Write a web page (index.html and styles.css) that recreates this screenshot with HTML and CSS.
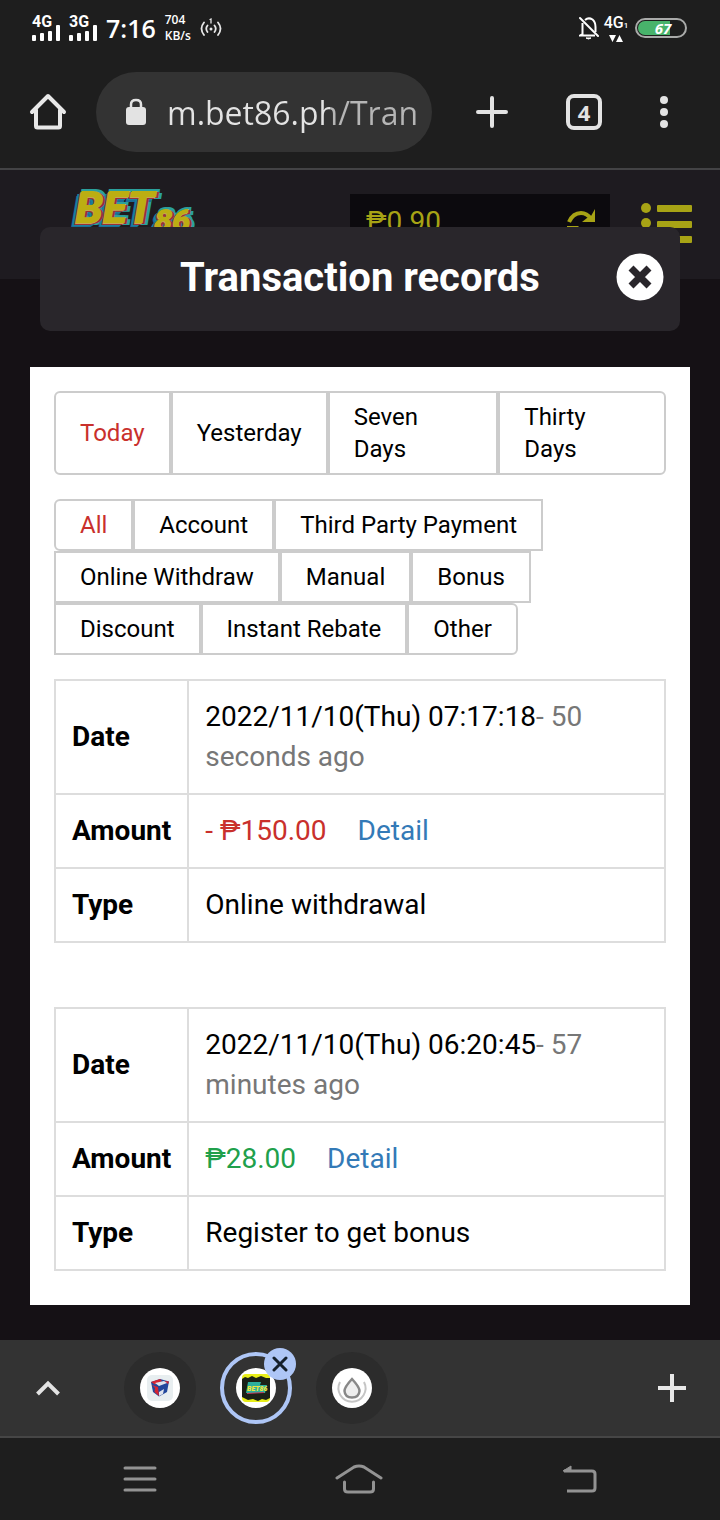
FILE: index.html
```html
<!DOCTYPE html>
<html lang="en">
<head>
<meta charset="utf-8">
<meta name="viewport" content="width=device-width, initial-scale=1">
<title>Transaction records</title>
<link rel="stylesheet" href="styles.css">
</head>
<body>
<div class="status">
  <div class="status-group">
    <div class="signal"><span class="signal-name">4G</span>
      <svg width="28" height="16" viewBox="0 0 28 16" fill="#fff"><rect y="10" width="4" height="6" rx="1"/><rect x="8" y="8" width="4" height="8" rx="1"/><rect x="16" y="6" width="4" height="10" rx="1"/><rect x="24" width="4" height="16" rx="1"/></svg></div>
    <div class="signal"><span class="signal-name">3G</span>
      <svg width="28" height="16" viewBox="0 0 28 16" fill="#fff"><rect y="10" width="4" height="6" rx="1"/><rect x="8" y="8" width="4" height="8" rx="1"/><rect x="16" y="6" width="4" height="10" rx="1"/><rect x="24" width="4" height="16" rx="1"/></svg></div>
    <span class="clock">7:16</span>
    <span class="speed">704<br>KB/s</span>
    <svg class="hotspot" width="22" height="22" viewBox="0 0 22 22" fill="none" stroke="#e8e8e8" stroke-width="1.8" stroke-linecap="round"><path d="M4 5.500Q-1 11.500 4 18M7.500 8.500Q5 11.500 7.500 15M18 5.500Q23 11.500 18 18M14.500 8.500Q17 11.500 14.500 15"/><path d="M10 2.500L11 2V6" stroke-width="1.300"/><circle cx="11" cy="12" r="1.500" fill="#e8e8e8" stroke="none"/></svg>
  </div>
  <div class="status-group status-right">
    <svg width="20" height="24" viewBox="0 0 20 24" fill="none" stroke="#fff" stroke-width="2"><path d="M6 4Q9.500 1 13.500 3.500Q16.500 6 16.500 11V16M3.500 7V18L1 19.500H16"/><path d="M1 2L19 20" stroke-linecap="round"/><path d="M7 22Q9.500 24 12 22Z" fill="#fff" stroke-width="1"/></svg>
    <div class="data"><span class="data-name">4G<small>1</small></span>
      <svg width="14" height="7" viewBox="0 0 14 7" fill="#fff"><path d="M0 0H7L3.500 7ZM7 7H14L10.500 0Z"/></svg></div>
    <div class="battery"><span class="battery-fill"></span><span class="battery-text">67</span></div>
  </div>
</div>
<header class="toolbar">
  <button class="tool tool-home" aria-label="Home"><svg width="40" height="40" viewBox="0 0 40 40" fill="none" stroke="#e8e8e8" stroke-width="4" stroke-linejoin="round" stroke-linecap="round"><path d="M4 20L20 4L36 20"/><path d="M8 18V34Q8 35.500 9.500 35.500H30.500Q32 35.500 32 34V18"/></svg></button>
  <label class="omnibox"><svg width="20" height="28" viewBox="0 0 20 28"><path d="M5 10V6.500Q5 2 10 2Q15 2 15 6.500V10" fill="none" stroke="#e3e3e3" stroke-width="2.500"/><rect y="9" width="20" height="18" rx="3" fill="#e3e3e3"/></svg>
    <input class="url" type="text" value="m.bet86.ph/Tran" aria-label="Address"></label>
  <button class="tool tool-new" aria-label="New tab"><svg width="32" height="32" viewBox="0 0 32 32" stroke="#e3e3e3" stroke-width="4" stroke-linecap="round"><path d="M16 2V30M2 16H30"/></svg></button>
  <button class="tool tool-tabs" aria-label="Tabs"><span class="tab-count">4</span></button>
  <button class="tool tool-more" aria-label="More"><svg width="8" height="32" viewBox="0 0 8 32" fill="#e3e3e3"><circle cx="4" cy="4" r="4"/><circle cx="4" cy="16" r="4"/><circle cx="4" cy="28" r="4"/></svg></button>
</header>
<main class="page">
  <div class="site-header">
    <div class="logo"><span class="logo-big">BET</span><span class="logo-small">86</span></div>
    <div class="balance"><span>₱0.90</span>
      <button class="refresh" aria-label="Refresh balance"><svg width="32" height="36" viewBox="0 0 32 36" fill="none" stroke="#a7a315" stroke-width="4"><path d="M4 13Q8 4 16 4Q22 4 26 10"/><path d="M30 0V13H17L22 9L26 7Z" fill="#a7a315" stroke="none"/><path d="M28 23Q24 32 16 32Q10 32 6 26"/><path d="M2 36V17H14L9 22Z" fill="#a7a315" stroke="none"/></svg></button></div>
    <button class="menu" aria-label="Menu"><svg width="52" height="42" viewBox="0 0 52 42" fill="#a7a315"><circle cx="5" cy="6" r="5"/><circle cx="5" cy="21" r="5"/><circle cx="5" cy="37" r="5"/><rect x="16" y="3" width="35" height="7" rx="1"/><rect x="16" y="19" width="35" height="7" rx="1"/><rect x="16" y="34" width="35" height="7" rx="1"/></svg></button>
  </div>
  <section class="dialog">
    <div class="dialog-head">
      <h1 class="dialog-title">Transaction records</h1>
      <button class="close" aria-label="Close"><svg width="48" height="48" viewBox="0 0 48 48"><circle cx="24" cy="24" r="23.500" fill="#fff"/><path d="M15 15L33 33M33 15L15 33" stroke="#29262b" stroke-width="7"/></svg></button>
    </div>
    <div class="card">
      <div class="filters">
        <button class="filter active">Today</button><button class="filter">Yesterday</button><button class="filter wide">Seven<br>Days</button><button class="filter wide">Thirty<br>Days</button>
      </div>
      <div class="filters">
        <button class="filter active">All</button><button class="filter">Account</button><button class="filter">Third Party Payment</button><button class="filter">Online Withdraw</button><button class="filter">Manual</button><button class="filter">Bonus</button><button class="filter">Discount</button><button class="filter">Instant Rebate</button><button class="filter">Other</button>
      </div>
      <table class="record">
        <tr><th scope="row">Date</th><td>2022/11/10(Thu) 07:17:18<span class="ago">- 50<br>seconds ago</span></td></tr>
        <tr><th scope="row">Amount</th><td><span class="minus">- ₱150.00</span><a class="detail" href="#">Detail</a></td></tr>
        <tr><th scope="row">Type</th><td>Online withdrawal</td></tr>
      </table>
      <table class="record">
        <tr><th scope="row">Date</th><td>2022/11/10(Thu) 06:20:45<span class="ago">- 57<br>minutes ago</span></td></tr>
        <tr><th scope="row">Amount</th><td><span class="plus">₱28.00</span><a class="detail" href="#">Detail</a></td></tr>
        <tr><th scope="row">Type</th><td>Register to get bonus</td></tr>
      </table>
    </div>
  </section>
</main>
<div class="tabstrip">
  <button class="tool tool-home" aria-label="Expand"><svg width="26" height="18" viewBox="0 0 26 18" fill="none" stroke="#e3e3e3" stroke-width="4"><path d="M2.500 15L13 4.500L23.500 15"/></svg></button>
  <div class="tabs">
    <button class="tab" aria-label="Cube tab"><svg width="40" height="40" viewBox="0 0 40 40"><circle cx="20" cy="20" r="20" fill="#fff"/><rect x="7" y="7" width="26" height="26" rx="5" fill="#e8eef0"/><path d="M11 14L20 11L29 13.500L27 24L19 28.500L13 24Z" fill="#22479c"/><path d="M11 14L20 11L22 13L15 16.500ZM12 17L18 19L19 28L14.500 24L15 20ZM24 13L29 13.500L28 16Z" fill="#d52532"/><path d="M15 15L24 13L27 15L19 18ZM19 24L24 21L23 26L19 28Z" fill="#dfe4ee"/></svg></button>
    <button class="tab current" aria-label="Bet86 tab"><svg width="40" height="40" viewBox="0 0 40 40"><circle cx="20" cy="20" r="20" fill="#fff"/><rect x="6" y="6" width="28" height="28" rx="4" fill="#e8ee19"/><path d="M6 11L9 9L12 10L16 8L20 10L25 8L30 10L34 10V30L30 32L26 31L22 33L17 31L12 32L6 29Z" fill="#1b2118"/><path d="M12 14H25L24 17H31L29 25H10Z" fill="#2daf9d"/><path d="M11 25.500L28 24.500" stroke="#c43a60"/><text x="11" y="23" font-family="Roboto" font-weight="900" font-style="italic" font-size="7" fill="#f1e83a">BET86</text></svg>
      <span class="tab-close"><svg width="16" height="16" viewBox="0 0 16 16" stroke="#15202c" stroke-width="3" stroke-linecap="round"><path d="M2 2L14 14M14 2L2 14"/></svg></span></button>
    <button class="tab" aria-label="Drop tab"><svg width="40" height="40" viewBox="0 0 40 40" fill="none"><circle cx="20" cy="20" r="20" fill="#fff"/><path d="M8 14A13.500 13.500 0 1 0 32 14" stroke="#c5c5c5" stroke-width="2"/><path d="M20 11Q12.500 19 12.500 23Q13 29.500 20 29.500Q27 29.500 27.500 23Q27.500 19 20 11Z" fill="#eee" stroke="#888" stroke-width="2.500"/></svg></button>
  </div>
  <button class="tool tool-add" aria-label="New tab"><svg width="28" height="28" viewBox="0 0 28 28" stroke="#e8e8e8" stroke-width="4"><path d="M14 0V28M0 14H28"/></svg></button>
</div>
<nav class="sysnav">
  <button class="tool" aria-label="Recents"><svg width="34" height="26" viewBox="0 0 34 26" stroke="#939393" stroke-width="3" stroke-linecap="round"><path d="M2 2H32M2 13H32M2 24H32"/></svg></button>
  <button class="tool" aria-label="Home"><svg width="48" height="30" viewBox="0 0 48 30" fill="none" stroke="#939393" stroke-width="3" stroke-linecap="round"><path d="M2 14L19 3Q24 1 29 3L46 14M9.500 18V25Q9.500 28 13 28H35Q38.500 28 38.500 25V18"/></svg></button>
  <button class="tool" aria-label="Back"><svg width="36" height="28" viewBox="0 0 36 28" fill="none" stroke="#939393" stroke-width="3"><path d="M3 6H31Q34 6 34 9V23Q34 26 31 26H6"/><path d="M2 6L10 1V6Z" fill="#939393" stroke-width="1"/></svg></button>
</nav>
</body>
</html>
```
FILE: styles.css
```css
* { box-sizing: border-box; }
body { margin: 0; min-height: 100vh; display: flex; flex-direction: column; background: #1e1e1e; color: #000; font-family: Roboto, "Liberation Sans", sans-serif; }
button { margin: 0; padding: 0; border: 0; background: none; font: inherit; color: inherit; cursor: pointer; }
svg { display: block; flex: none; }

.status { display: flex; justify-content: space-between; height: 56px; padding: 0 33px 0 32px; color: #fff; }
.status-group { display: flex; align-items: center; gap: 9px; }
.status-right { gap: 6px; }
.signal { display: grid; width: 28px; }
.signal > * { grid-area: 1 / 1; }
.signal svg { align-self: end; }
.signal-name { font-weight: 700; font-size: 16px; line-height: 14px; height: 26px; }
.clock { font: 600 25px/28px "Open Sans", sans-serif; }
.speed { font: 600 12px/16px "Open Sans", sans-serif; }
.data { display: flex; flex-direction: column; align-items: center; width: 22px; }
.data-name { font-weight: 500; font-size: 16px; line-height: 18px; white-space: nowrap; }
.data-name small { font-size: 8px; }
.battery { display: grid; width: 52px; height: 20px; margin-left: 2px; padding: 1px; border: 2px solid #a9aaa9; border-radius: 10px; }
.battery > * { grid-area: 1 / 1; }
.battery-fill { width: 70%; background: #48b36b; border-radius: 8px 0 0 8px; }
.battery-text { align-self: center; padding-left: 4px; text-align: center; font: italic 700 15px/14px "Open Sans", sans-serif; }

.toolbar { display: flex; align-items: center; height: 114px; padding-right: 22px; border-bottom: 2px solid #434345; }
.tool { display: flex; align-items: center; justify-content: center; height: 80px; }
.tool-home { width: 96px; }
.tool-new { width: 92px; margin-left: 14px; }
.tool-tabs { width: 92px; }
.tool-more { width: 68px; }
.omnibox { flex: 1; min-width: 0; display: flex; align-items: center; gap: 12px; height: 80px; padding: 0 8px 0 30px; border-radius: 40px; background: #333; }
.url { flex: 1; min-width: 0; height: 56px; padding: 0 0 0 9px; border: 0; outline: 0; font: 32px/48px "Open Sans", sans-serif; color: transparent; background: linear-gradient(90deg, #e3e3e3 172px, #b5b5b5 172px); background-clip: text; -webkit-background-clip: text; }
.tab-count { width: 36px; height: 36px; border: 4px solid #e3e3e3; border-radius: 8px; color: #e3e3e3; font: 700 22px/28px "Open Sans", sans-serif; text-align: center; }

.page { flex: 1; background: #151115; }
.site-header { display: flex; align-items: flex-start; height: 109px; padding: 16px 27px 0 76px; background: #1e1b20; }
.logo { display: flex; color: #bcae12; font-style: italic; font-weight: 900; text-shadow: -1px 1px #c5a653, -2px 2px #9a2f37, 2px 1px #9a2f37, -4px 3px #1a7fa0, -5px 5px #1a6d96, 3px -2px #2ba09c, 5px 2px #2ba09c, 0 -2px #2ba09c; }
.logo-big { font-size: 44px; line-height: 44px; }
.logo-small { padding-top: 16px; font-size: 32px; line-height: 36px; }
.balance { display: flex; justify-content: space-between; width: 260px; height: 60px; margin: 8px 31px 0 auto; padding: 10px 13px 0 16px; background: #0c0a0e; color: #a7a315; font-size: 28px; line-height: 36px; }
.refresh { height: 36px; padding-top: 5px; }
.menu { padding-top: 16px; }
.dialog { position: relative; margin-top: -52px; padding: 0 30px 35px; }
.dialog-head { display: grid; grid-template-columns: 48px 1fr 48px; align-items: center; height: 104px; margin: 0 10px 36px; padding: 0 16px 4px; border-radius: 10px; background: #29262b; color: #fff; }
.dialog-title { grid-column: 2; margin: 0; padding-top: 2px; font-size: 40px; line-height: 48px; font-weight: 700; text-align: center; white-space: nowrap; }
.card { padding: 24px 24px 34px; background: #fff; }

.filters { display: flex; flex-wrap: wrap; margin-bottom: 24px; }
.filter { padding: 8px 24px; border: 2px solid #ccc; font-size: 24px; line-height: 32px; text-align: left; }
.filter.active { color: #c9302c; }
.wide { flex: 1 1 auto; }
.filter:first-child { border-radius: 6px 0 0 6px; }
.filter:last-child { border-radius: 0 6px 6px 0; }

.record { width: 100%; margin-bottom: 64px; border-collapse: collapse; font-size: 28px; line-height: 40px; }
.record:last-child { margin-bottom: 0; }
.record th, .record td { padding: 16px; border: 2px solid #ddd; text-align: left; }
.record th { width: 133px; }
.ago { color: #777; }
.minus { color: #c9302c; }
.plus { color: #20a04b; }
.detail { margin-left: 31px; color: #337ab7; text-decoration: none; }

.tabstrip { display: flex; align-items: center; height: 98px; border-bottom: 2px solid #464646; background: #333; }
.tabs { flex: 1; display: flex; gap: 24px; padding-left: 28px; }
.tab { position: relative; display: flex; align-items: center; justify-content: center; width: 72px; height: 72px; border-radius: 50%; background: #2c2c2c; }
.tab.current { border: 4px solid #aec6f6; background: none; }
.tab-close { position: absolute; top: -8px; right: -8px; display: flex; align-items: center; justify-content: center; width: 32px; height: 32px; border-radius: 50%; background: #aec6f6; }
.tool-add { width: 96px; }
.sysnav { display: flex; justify-content: space-between; align-items: center; height: 82px; padding: 0 123px; }
```
